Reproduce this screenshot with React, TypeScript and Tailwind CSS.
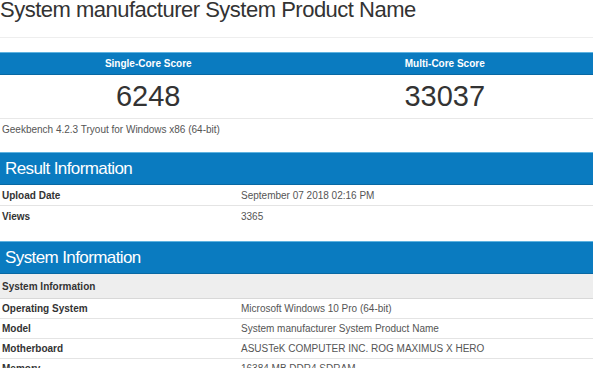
import React from "react";

const font = { fontFamily: '"Liberation Sans", Arial, sans-serif' };

const resultRows = [
  { label: "Upload Date", value: "September 07 2018 02:16 PM" },
  { label: "Views", value: "3365" },
];

const systemRows = [
  { label: "Operating System", value: "Microsoft Windows 10 Pro (64-bit)" },
  { label: "Model", value: "System manufacturer System Product Name" },
  { label: "Motherboard", value: "ASUSTeK COMPUTER INC. ROG MAXIMUS X HERO" },
  { label: "Memory", value: "16384 MB DDR4 SDRAM" },
];

function SectionBar({ title }: { title: string }) {
  return (
    <div className="flex h-[33px] items-center border-t border-t-[#5fb3e0] border-b border-b-[#0868a3] bg-[#0a7bc0] px-[5px] text-[17px] tracking-[-0.6px] text-white">
      {title}
    </div>
  );
}

function InfoRow({ label, value, tall, last }: { label: string; value: string; tall?: boolean; last?: boolean }) {
  return (
    <div
      className={`flex items-center text-[10px] ${tall ? "h-[21px]" : "h-[20px]"} ${
        last ? "" : "border-b border-[#e4e4e4]"
      }`}
    >
      <div className="w-[241px] pl-[2px] font-bold text-[#333]">{label}</div>
      <div className="text-[#555]">{value}</div>
    </div>
  );
}

export default function App() {
  return (
    <div className="h-[368px] w-[593px] overflow-hidden bg-white" style={font}>
      <div className="h-[38px] border-b border-[#eeeeee]">
        <h1 className="text-[22px] leading-[20px] tracking-[-0.5px] text-[#333]">
          System manufacturer System Product Name
        </h1>
      </div>

      <div className="mt-[14px]">
        <div className="flex h-[23px] items-center border-t border-t-[#5fb3e0] border-b border-b-[#0868a3] bg-[#0a7bc0] text-[10px] font-bold text-white">
          <div className="flex-1 text-center">Single-Core Score</div>
          <div className="flex-1 text-center">Multi-Core Score</div>
        </div>
        <div className="flex h-[44px] items-center border-b border-[#e8e8e8] text-[29px] leading-none text-[#333]">
          <div className="flex-1 text-center">6248</div>
          <div className="flex-1 text-center">33037</div>
        </div>
      </div>

      <div className="pl-[2px] pt-[4px] text-[10px] leading-[13px] text-[#555]">
        Geekbench 4.2.3 Tryout for Windows x86 (64-bit)
      </div>

      <div className="mt-[16px]">
        <SectionBar title="Result Information" />
        {resultRows.map((r, i) => (
          <InfoRow key={r.label} label={r.label} value={r.value} tall last={i === resultRows.length - 1} />
        ))}
      </div>

      <div className="mt-[14px]">
        <SectionBar title="System Information" />
        <div className="flex h-[25px] items-center border-b border-[#d8d8d8] bg-[#eeeeee] pl-[2px] text-[10px] font-bold text-[#333]">
          System Information
        </div>
        {systemRows.map((r) => (
          <InfoRow key={r.label} label={r.label} value={r.value} />
        ))}
      </div>
    </div>
  );
}
